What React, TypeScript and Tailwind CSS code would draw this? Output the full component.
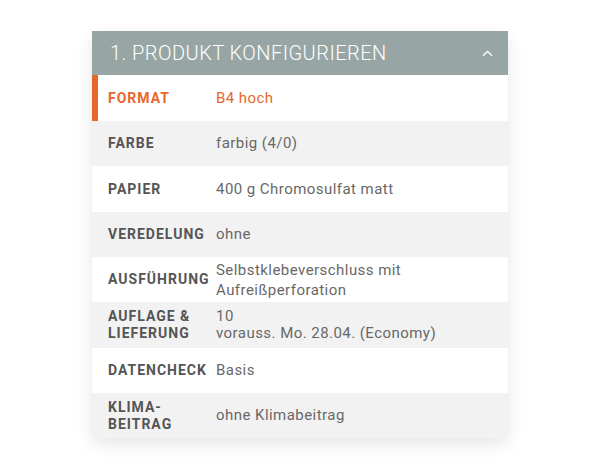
import React from "react";

type Row = { label: React.ReactNode; value: React.ReactNode; h: string; bg: string; active?: boolean; lh?: string };

const rows: Row[] = [
  { label: "FORMAT", value: "B4 hoch", h: "h-[46px]", bg: "bg-white", active: true },
  { label: "FARBE", value: "farbig (4/0)", h: "h-[45px]", bg: "bg-[#f2f2f2]" },
  { label: "PAPIER", value: "400 g Chromosulfat matt", h: "h-[46px]", bg: "bg-white" },
  { label: "VEREDELUNG", value: "ohne", h: "h-[45px]", bg: "bg-[#f2f2f2]" },
  {
    label: "AUSFÜHRUNG",
    value: (
      <>
        Selbstklebeverschluss mit
        <br />
        Aufreißperforation
      </>
    ),
    h: "h-[45px]",
    bg: "bg-white",
    lh: "leading-[20px]",
  },
  {
    label: (
      <>
        AUFLAGE &amp;
        <br />
        LIEFERUNG
      </>
    ),
    value: (
      <>
        10
        <br />
        vorauss. Mo. 28.04. (Economy)
      </>
    ),
    h: "h-[46px]",
    bg: "bg-[#f2f2f2]",
    lh: "leading-[17px]",
  },
  { label: "DATENCHECK", value: "Basis", h: "h-[45px]", bg: "bg-white" },
  {
    label: (
      <>
        KLIMA-
        <br />
        BEITRAG
      </>
    ),
    value: "ohne Klimabeitrag",
    h: "h-[45px]",
    bg: "bg-[#f2f2f2]",
  },
];

export default function App() {
  return (
    <div
      className="w-[600px] h-[470px] bg-white pt-[31px] pl-[92px]"
      style={{ fontFamily: "Roboto, 'Noto Sans', sans-serif" }}
    >
      <div className="w-[416px] bg-white shadow-[0_6px_16px_rgba(0,0,0,0.10)]">
        <div className="h-[44px] bg-[#97a5a4] flex items-center justify-between pl-[18px] pr-[15px]">
          <span className="text-white text-[20px] font-light tracking-[0.45px]">1. PRODUKT KONFIGURIEREN</span>
          <svg width="11" height="7" viewBox="0 0 11 7">
            <path d="M1 5.8 L5.5 1.5 L10 5.8" fill="none" stroke="white" strokeWidth="1.3" />
          </svg>
        </div>
        {rows.map((r, i) => (
          <div key={i} className={`relative flex items-center ${r.h} ${r.bg} pl-[16px]`}>
            {r.active && <div className="absolute left-0 top-0 bottom-0 w-[6px] bg-[#e8672a]" />}
            <div
              className={`w-[108px] shrink-0 text-[14px] font-bold leading-[17px] tracking-[1px] ${
                r.active ? "text-[#e8672a]" : "text-[#555555]"
              }`}
            >
              {r.label}
            </div>
            <div
              className={`text-[15px] tracking-[0.45px] ${r.lh ?? "leading-[17px]"} ${
                r.active ? "text-[#e8672a]" : "text-[#686868]"
              }`}
            >
              {r.value}
            </div>
          </div>
        ))}
      </div>
    </div>
  );
}
